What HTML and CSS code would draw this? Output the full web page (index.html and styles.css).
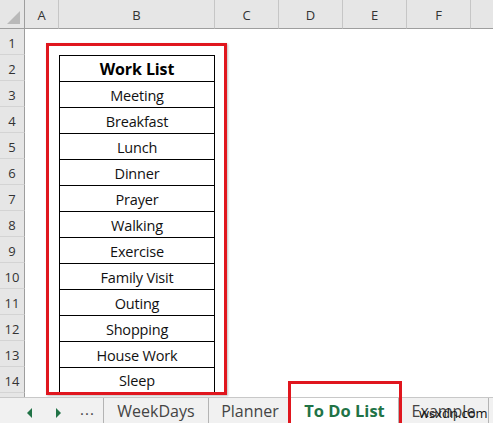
FILE: index.html
```html
<!DOCTYPE html>
<html>
<head>
<meta charset="utf-8">
<link rel="stylesheet" href="styles.css">
</head>
<body>
<div class="app">
  <div class="sheet">
    <div class="grid">
      <div class="corner"><span class="tri"></span></div>
      <div class="colh">A</div>
      <div class="colh">B</div>
      <div class="colh">C</div>
      <div class="colh">D</div>
      <div class="colh">E</div>
      <div class="colh">F</div>
      <div class="colh last"></div>

      <div class="rowh">1</div><div class="c"></div><div class="c"></div><div class="c"></div><div class="c"></div><div class="c"></div><div class="c"></div><div class="c"></div>
      <div class="rowh">2</div><div class="c"></div><div class="c t th">Work List</div><div class="c"></div><div class="c"></div><div class="c"></div><div class="c"></div><div class="c"></div>
      <div class="rowh">3</div><div class="c"></div><div class="c t">Meeting</div><div class="c"></div><div class="c"></div><div class="c"></div><div class="c"></div><div class="c"></div>
      <div class="rowh">4</div><div class="c"></div><div class="c t">Breakfast</div><div class="c"></div><div class="c"></div><div class="c"></div><div class="c"></div><div class="c"></div>
      <div class="rowh">5</div><div class="c"></div><div class="c t">Lunch</div><div class="c"></div><div class="c"></div><div class="c"></div><div class="c"></div><div class="c"></div>
      <div class="rowh">6</div><div class="c"></div><div class="c t">Dinner</div><div class="c"></div><div class="c"></div><div class="c"></div><div class="c"></div><div class="c"></div>
      <div class="rowh">7</div><div class="c"></div><div class="c t">Prayer</div><div class="c"></div><div class="c"></div><div class="c"></div><div class="c"></div><div class="c"></div>
      <div class="rowh">8</div><div class="c"></div><div class="c t">Walking</div><div class="c"></div><div class="c"></div><div class="c"></div><div class="c"></div><div class="c"></div>
      <div class="rowh">9</div><div class="c"></div><div class="c t">Exercise</div><div class="c"></div><div class="c"></div><div class="c"></div><div class="c"></div><div class="c"></div>
      <div class="rowh">10</div><div class="c"></div><div class="c t">Family Visit</div><div class="c"></div><div class="c"></div><div class="c"></div><div class="c"></div><div class="c"></div>
      <div class="rowh">11</div><div class="c"></div><div class="c t">Outing</div><div class="c"></div><div class="c"></div><div class="c"></div><div class="c"></div><div class="c"></div>
      <div class="rowh">12</div><div class="c"></div><div class="c t">Shopping</div><div class="c"></div><div class="c"></div><div class="c"></div><div class="c"></div><div class="c"></div>
      <div class="rowh">13</div><div class="c"></div><div class="c t">House Work</div><div class="c"></div><div class="c"></div><div class="c"></div><div class="c"></div><div class="c"></div>
      <div class="rowh">14</div><div class="c"></div><div class="c t tl">Sleep</div><div class="c"></div><div class="c"></div><div class="c"></div><div class="c"></div><div class="c"></div>
      <div class="rowh"></div><div class="c"></div><div class="c"></div><div class="c"></div><div class="c"></div><div class="c"></div><div class="c"></div><div class="c"></div>
    </div>
    <div class="highlight"></div>
  </div>
  <div class="tabbar">
    <div class="nav">
      <span class="arrow left"></span>
      <span class="arrow right"></span>
      <span class="dots">...</span>
    </div>
    <div class="tab w1">WeekDays</div>
    <div class="tab w2">Planner</div>
    <div class="tab active">To Do List<span class="tabmark"></span></div>
    <div class="tab w4">Example<span class="wm">wsxdn.com</span></div>
  </div>
</div>
</body>
</html>
```
FILE: styles.css
```css
* { box-sizing: border-box; }
html, body { margin: 0; padding: 0; background: #fff; }
body { font-family: "Open Sans", "Noto Sans", sans-serif; }
.app { width: 493px; height: 423px; overflow: hidden; display: flex; flex-direction: column; }
.sheet { position: relative; height: 397px; overflow: hidden; flex: none; }
.grid {
  display: grid;
  grid-template-columns: 25px 34px 156px 64px 64px 64px 64px 22px;
  grid-template-rows: 29px repeat(15, 26px);
}
.corner { background: #e6e6e6; border-right: 1px solid #9e9e9e; border-bottom: 1px solid #9e9e9e; position: relative; }
.tri { position: absolute; right: 4px; bottom: 4px; width: 0; height: 0; border-left: 13px solid transparent; border-bottom: 13px solid #b9b9b9; }
.colh {
  background: #e6e6e6; border-right: 1px solid #c6c6c6; border-bottom: 1px solid #9e9e9e;
  display: flex; align-items: center; justify-content: center;
  font-size: 13px; color: #333; padding-top: 2px;
}
.colh.last { border-right: none; }
.rowh {
  background: #e6e6e6; border-right: 1px solid #9e9e9e; border-bottom: 1px solid #d4d4d4;
  display: flex; align-items: center; justify-content: center;
  font-size: 13px; color: #333; padding-top: 2px;
}
.c { background: #fff; }
.t {
  border-left: 1px solid #000; border-right: 1px solid #000; border-top: 1px solid #000;
  display: flex; align-items: center; justify-content: center;
  font-size: 14.5px; color: #111; letter-spacing: -0.2px; padding-top: 1px;
}
.th { font-weight: 700; font-size: 16px; color: #000; letter-spacing: -0.1px; }
.tl { border-bottom: 1px solid #000; }
.highlight {
  position: absolute; left: 46px; top: 43px; width: 181px; height: 352px;
  border: 3px solid #e0161e; box-shadow: 1px 1px 2px rgba(0,0,0,0.25);
}
.tabbar {
  flex: 1; background: #f1f1f1; border-top: 1px solid #c8c8c8;
  display: flex; align-items: stretch; position: relative;
}
.nav { width: 104px; display: flex; align-items: center; border-right: 1px solid #b4b4b4; position: relative; }
.arrow { position: absolute; top: 10px; width: 0; height: 0; border-top: 5px solid transparent; border-bottom: 5px solid transparent; }
.arrow.left { left: 27px; border-right: 5px solid #217346; }
.arrow.right { left: 56px; border-left: 5px solid #217346; }
.dots { position: absolute; left: 80px; top: 1px; font-size: 15px; line-height: 20px; color: #444; letter-spacing: 1px; }
.tab {
  display: flex; align-items: center; justify-content: center;
  font-size: 16px; color: #444; border-right: 1px solid #b4b4b4; position: relative;
}
.w1 { width: 105px; }
.w2 { width: 82px; border-right: none; }
.active { width: 108px; background: #fff; color: #217346; font-weight: 700; font-size: 16.5px; border-right: 1px solid #b4b4b4; }
.tabmark {
  position: absolute; left: -3px; top: -17px; width: 114px; height: 46px;
  border: 3px solid #e0161e;
}
.w4 { width: 90px; }
.wm { position: absolute; left: 20px; top: 6px; font-size: 13px; font-weight: 400; color: #111; }
```
